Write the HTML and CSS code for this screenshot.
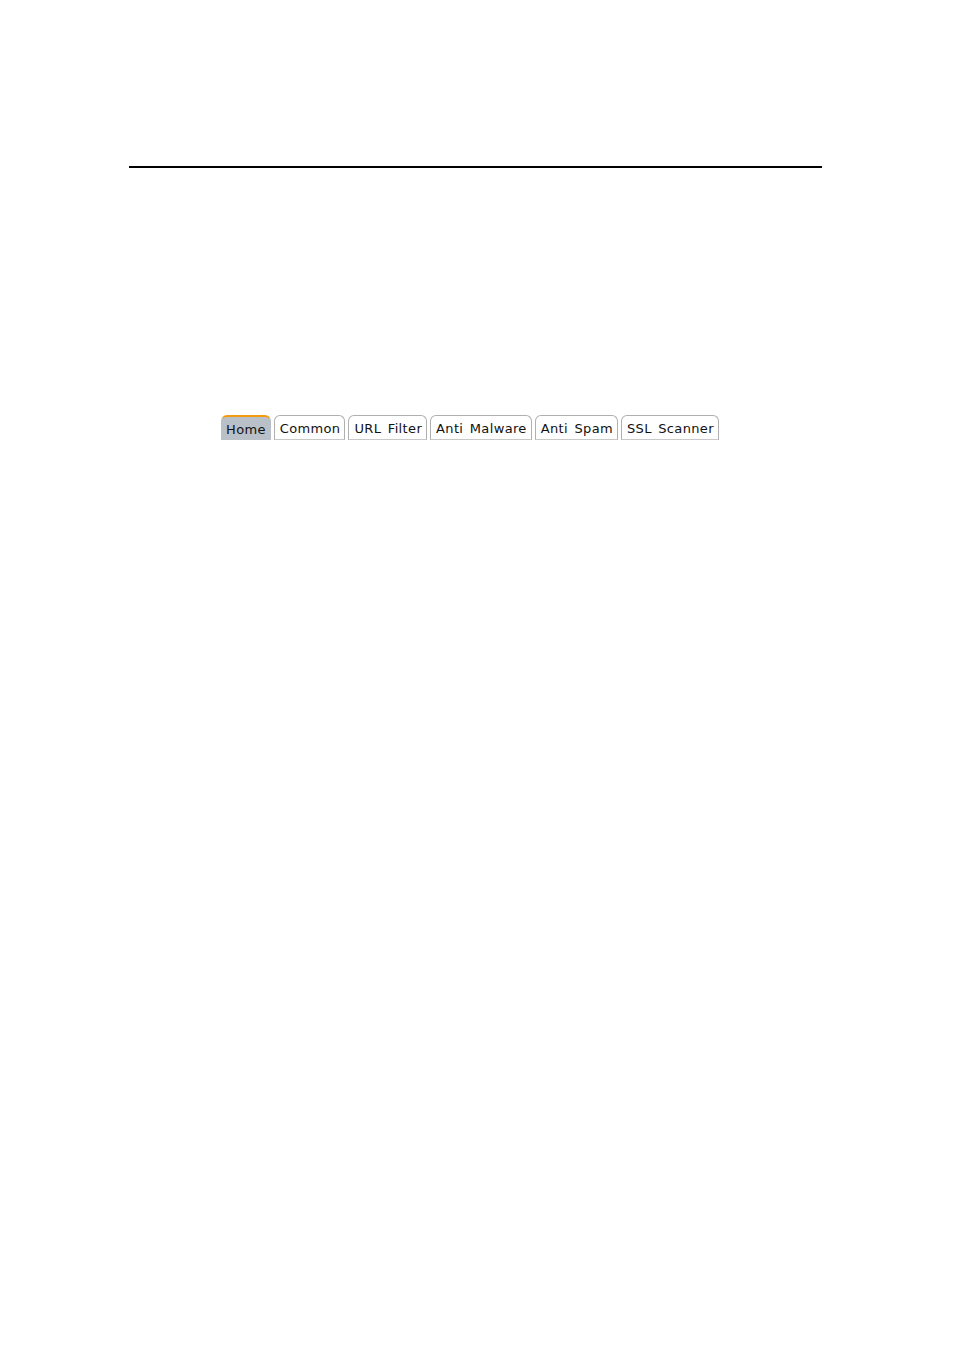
FILE: index.html
```html
<!DOCTYPE html>
<html>
<head>
<meta charset="utf-8">
<link rel="stylesheet" href="styles.css">
</head>
<body>
<div class="page">
  <hr class="rule">
  <div class="tabs">
    <div class="tab active">Home</div>
    <div class="tab">Common</div>
    <div class="tab">URL Filter</div>
    <div class="tab">Anti Malware</div>
    <div class="tab">Anti Spam</div>
    <div class="tab">SSL Scanner</div>
  </div>
</div>
</body>
</html>
```
FILE: styles.css
```css
html, body {
  margin: 0;
  padding: 0;
  background: #fff;
}
.page {
  width: 954px;
  height: 1350px;
  padding-top: 166px;
  box-sizing: border-box;
}
.rule {
  margin: 0 0 0 129px;
  width: 693px;
  height: 2px;
  border: 0;
  background: #000;
}
.tabs {
  display: flex;
  gap: 3px;
  margin: 247px 0 0 221px;
  align-items: flex-end;
}
.tab {
  font-family: "DejaVu Sans", sans-serif;
  font-size: 13px;
  letter-spacing: 0.35px;
  word-spacing: 2px;
  color: #111;
  height: 23px;
  line-height: 25px;
  padding: 0 4px 0 5px;
  border: 1px solid #b0b0b0;
  border-bottom: 1px solid #c8c8c8;
  border-radius: 6px 6px 0 0;
  background: #fff;
}
.tab.active {
  background: #b9c0c8;
  border-color: #b9c0c8;
  border-top: 2px solid #f39c12;
  height: 22px;
  line-height: 26px;
  padding: 0 4px;
}
```
